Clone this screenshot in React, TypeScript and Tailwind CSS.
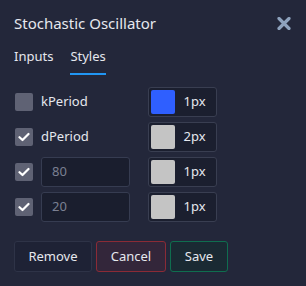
import React from "react";

const font = { fontFamily: '"Noto Sans", "Open Sans", sans-serif' };

function Check({ checked }: { checked: boolean }) {
  return (
    <div className="w-[18px] h-[18px] ml-px rounded-[2px] bg-[#5f6274] flex items-center justify-center shrink-0">
      {checked && (
        <svg width="12" height="10" viewBox="0 0 12 10">
          <path d="M1.5 5.2 L4.5 8 L10.5 2" fill="none" stroke="#ffffff" strokeWidth="2.2" strokeLinecap="round" strokeLinejoin="round" />
        </svg>
      )}
    </div>
  );
}

function Swatch({ color, width }: { color: string; width: string }) {
  return (
    <div className="w-[69px] h-[30px] rounded-[3px] border border-[#393e51] bg-[#1b1f2f] flex items-center p-[2px]">
      <div className="w-[24px] h-[24px] rounded-[2px]" style={{ backgroundColor: color }} />
      <div className="flex-1 text-center text-[13px] text-[#e6e8ee]">{width}</div>
    </div>
  );
}

function Row({ checked, label, input, color, width }: { checked: boolean; label?: string; input?: string; color: string; width: string }) {
  return (
    <div className="h-[30px] flex items-center">
      <div className="w-[134px] flex items-center shrink-0">
        <Check checked={checked} />
        {label ? (
          <span className="ml-[8px] text-[13px] text-[#e6e8ee]">{label}</span>
        ) : (
          <div className="ml-[8px] w-[89px] h-[30px] rounded-[3px] border border-[#363c51] bg-[#1a1e2e] flex items-center pl-[10px] text-[13px] text-[#7b8092]">
            {input}
          </div>
        )}
      </div>
      <Swatch color={color} width={width} />
    </div>
  );
}

export default function App() {
  return (
    <div className="w-[306px] h-[286px] bg-[#23273a] px-[14px] pt-[12px] overflow-hidden" style={font}>
      <div className="flex items-center justify-between h-[22px]">
        <span className="text-[15px] text-[#e6e8ee] leading-[22px]">Stochastic Oscillator</span>
        <svg width="14" height="13" viewBox="0 0 14 13" className="mr-[1px]">
          <path d="M2 1.5 L12 11.5 M12 1.5 L2 11.5" stroke="#8ea2bd" strokeWidth="3.2" strokeLinecap="round" />
        </svg>
      </div>
      <div className="flex mt-[13px] gap-[17px] text-[13px] text-[#e6e8ee]">
        <div className="pb-[7px] leading-[19px]">Inputs</div>
        <div className="pb-[7px] leading-[19px] border-b-2 border-[#2196f3]">Styles</div>
      </div>
      <div className="flex flex-col gap-[5px] mt-[12px]">
        <Row checked={false} label="kPeriod" color="#2f5fff" width="1px" />
        <Row checked={true} label="dPeriod" color="#c4c4c4" width="2px" />
        <Row checked={true} input="80" color="#c4c4c4" width="1px" />
        <Row checked={true} input="20" color="#c4c4c4" width="1px" />
      </div>
      <div className="flex gap-[4px] mt-[19px] text-[13px] text-[#e6e8ee]">
        <button className="w-[78px] h-[31px] rounded-[3px] border border-[#2e3347] bg-[#1e2235]">Remove</button>
        <button className="w-[70px] h-[31px] rounded-[3px] border border-[#8b2b36] bg-[#33263a]">Cancel</button>
        <button className="w-[58px] h-[31px] rounded-[3px] border border-[#0f6e4f] bg-[#1a2a33]">Save</button>
      </div>
    </div>
  );
}
